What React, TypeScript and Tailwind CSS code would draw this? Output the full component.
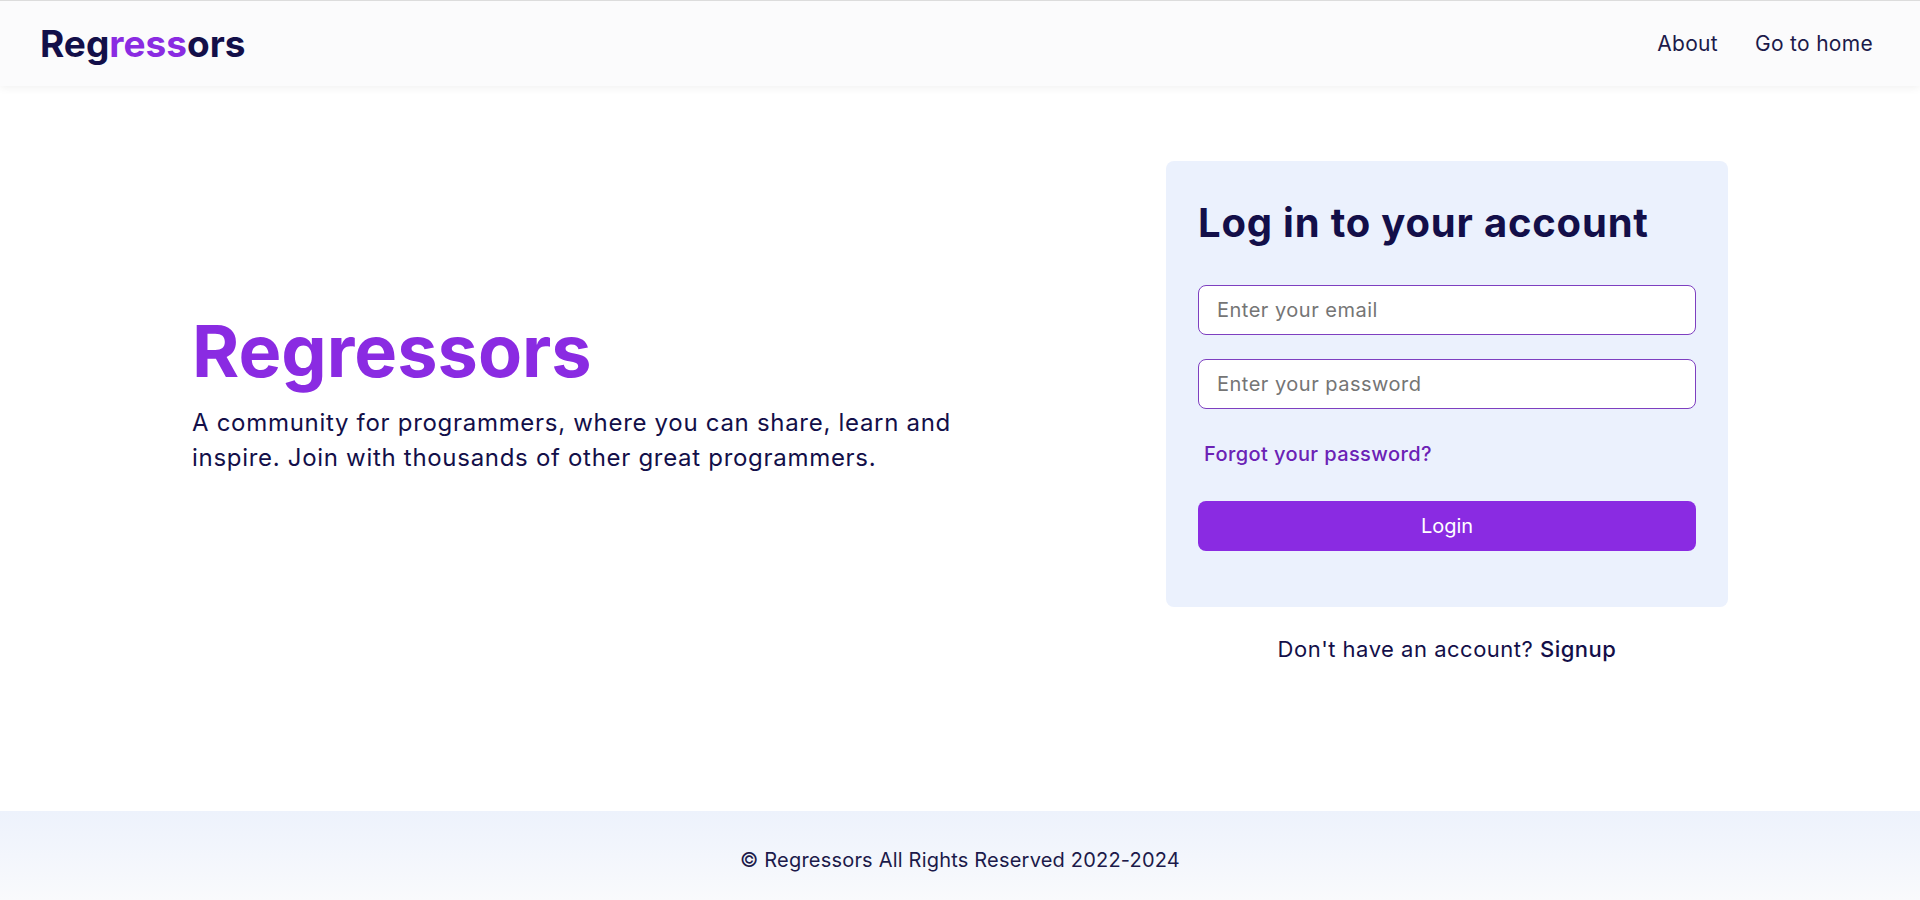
import { useState } from 'react'

const font = { fontFamily: 'Inter, "Noto Sans", sans-serif' }

function Header(): JSX.Element {
  return (
    <header className="flex h-[86px] items-center justify-between border-t border-[#dcdcdc] bg-[#fbfbfc] pl-[40px] pr-[47px] shadow-[0_2px_8px_rgba(0,0,0,0.06)]">
      <a href="#" className="text-[37px] font-bold text-[#130f49]">
        Reg<span className="text-[#8a2be2]">ress</span>ors
      </a>
      <nav className="flex items-center gap-[37px] text-[21px] tracking-[0.3px] text-[#1c1a4a]">
        <a href="#">About</a>
        <a href="#">Go to home</a>
      </nav>
    </header>
  )
}

function LoginCard(): JSX.Element {
  const [email, setEmail] = useState('')
  const [password, setPassword] = useState('')

  return (
    <div className="flex w-[562px] flex-col items-center">
      <form
        className="w-full rounded-lg bg-[#ebf1fd] px-8 pt-8 pb-14"
        onSubmit={(e) => e.preventDefault()}
      >
        <h2 className="text-[40px] font-bold leading-[60px] tracking-[0.8px] text-[#130f49]">
          Log in to your account
        </h2>
        <input
          type="email"
          value={email}
          onChange={(e) => setEmail(e.target.value)}
          placeholder="Enter your email"
          className="mt-8 block h-[50px] w-full rounded-lg border border-[#7e3fc0] bg-white pr-5 pl-[18px] text-[20px] tracking-[0.5px] text-[#130f49] outline-none placeholder:text-[#757575]"
        />
        <input
          type="password"
          value={password}
          onChange={(e) => setPassword(e.target.value)}
          placeholder="Enter your password"
          className="mt-6 block h-[50px] w-full rounded-lg border border-[#7e3fc0] bg-white pr-5 pl-[18px] text-[20px] tracking-[0.5px] text-[#130f49] outline-none placeholder:text-[#757575]"
        />
        <a
          href="#"
          className="mt-[30px] block pl-1.5 text-[20px] font-medium leading-[30px] tracking-[0.4px] text-[#6b22b5]"
        >
          Forgot your password?
        </a>
        <button
          type="submit"
          className="mt-8 block h-[50px] w-full rounded-lg bg-[#8a2be2] text-[20px] text-white"
        >
          Login
        </button>
      </form>
      <p className="mt-[26px] text-[22px] leading-[33px] tracking-[0.5px] text-[#130f49]">
        Don't have an account?{' '}
        <a href="#" className="font-medium">
          Signup
        </a>
      </p>
    </div>
  )
}

export default function App(): JSX.Element {
  return (
    <div className="flex min-h-screen flex-col bg-white" style={font}>
      <Header />
      <main className="flex flex-1 items-start justify-between px-[192px] pt-[75px]">
        <div className="pt-[154px]">
          <h1 className="text-[72px] font-bold leading-[72px] text-[#8a2be2]">Regressors</h1>
          <p className="mt-[18px] w-[790px] text-[24px] leading-[35px] tracking-[0.7px] text-[#130f49]">
            A community for programmers, where you can share, learn and inspire. Join with
            thousands of other great programmers.
          </p>
        </div>
        <LoginCard />
      </main>
      <footer className="flex h-[89px] items-center justify-center bg-gradient-to-b from-[#edf2fc] to-[#f9fafc] pt-[9px] text-[20px] tracking-[0.2px] text-[#1c1a4a]">
        © Regressors All Rights Reserved 2022-2024
      </footer>
    </div>
  )
}
